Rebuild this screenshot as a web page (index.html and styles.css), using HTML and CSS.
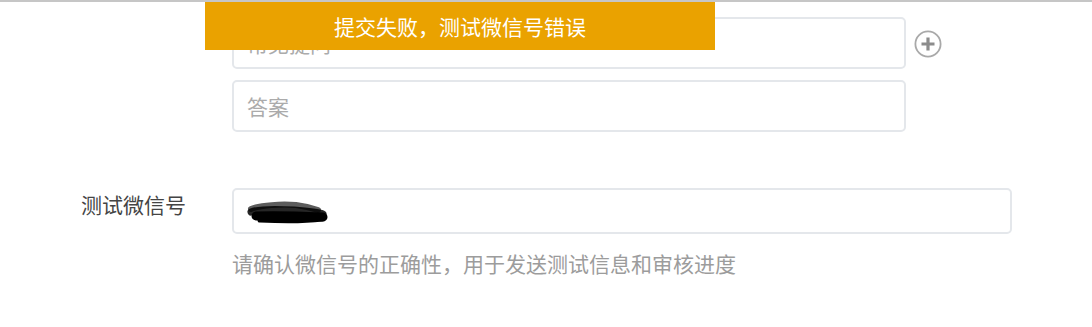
FILE: index.html
```html
<!DOCTYPE html>
<html lang="zh-CN">
<head>
<meta charset="utf-8">
<title>测试微信号</title>
<link rel="stylesheet" href="styles.css">
</head>
<body>
<div class="page">
  <form class="form">
    <div class="row">
      <div class="label"></div>
      <div class="controls">
        <div class="qa-line">
          <input class="field field-qa" type="text" placeholder="常见提问">
          <span class="add-btn" aria-label="添加">
            <svg width="28" height="28" viewBox="0 0 28 28">
              <circle cx="14" cy="14" r="12.6" fill="none" stroke="#a9a9a9" stroke-width="1.8"/>
              <path d="M7.5 14 H20.5 M14 7.5 V20.5" stroke="#8c8c8c" stroke-width="3.2" stroke-linecap="butt"/>
            </svg>
          </span>
        </div>
        <input class="field field-qa answer" type="text" placeholder="答案">
      </div>
    </div>

    <div class="row row-wx">
      <label class="label">测试微信号</label>
      <div class="controls">
        <div class="wx-wrap">
          <input class="field field-wx" type="text">
          <svg class="scribble" width="90" height="30" viewBox="0 0 90 30">
            <path d="M5 10 C 15 6, 35 5, 50 6 C 58 7, 66 9, 72 11" fill="none" stroke="#333" stroke-opacity="0.8" stroke-width="6" stroke-linecap="round"/>
            <path d="M5 13 C 12 10, 30 10, 48 11 C 62 12, 72 13, 77 15" fill="none" stroke="#000" stroke-opacity="0.85" stroke-width="7" stroke-linecap="round"/>
            <path d="M10 17 C 30 16, 55 17, 77 18" fill="none" stroke="#000" stroke-width="9" stroke-linecap="round"/>
            <path d="M14 21 C 35 22, 60 22, 76 20" fill="none" stroke="#000" stroke-width="5" stroke-linecap="round"/>
          </svg>
        </div>
        <p class="help">请确认微信号的正确性，用于发送测试信息和审核进度</p>
      </div>
    </div>
  </form>

  <div class="toast">提交失败，测试微信号错误</div>
</div>
</body>
</html>
```
FILE: styles.css
```css
* { box-sizing: border-box; }

html, body {
  margin: 0;
  padding: 0;
  background: #fff;
}

body {
  font-family: "Noto Sans CJK SC", "Noto Sans", "Liberation Sans", sans-serif;
  font-size: 21px;
  color: #333;
  border-top: 2px solid #c6c6c6;
  height: 327px;
  overflow: hidden;
}

.page {
  position: relative;
}

.form {
  padding-top: 15px;
}

.row {
  display: grid;
  grid-template-columns: 232px 1fr;
}

.label {
  padding-left: 81px;
  padding-top: 1px;
  line-height: 30px;
  color: #444;
  font-size: 21px;
}

.controls {
  display: flex;
  flex-direction: column;
}

.qa-line {
  display: flex;
  align-items: center;
  gap: 8px;
}

.field {
  display: block;
  border: 2px solid #e4e7eb;
  border-radius: 5px;
  background: #fff;
  font-family: inherit;
  font-size: 21px;
  color: #333;
  padding: 0 0 0 13px;
  outline: none;
}

.field::placeholder {
  color: #ababab;
}

.field-qa {
  width: 674px;
  height: 52px;
}

.answer {
  margin-top: 11px;
}

.add-btn {
  display: inline-flex;
  width: 28px;
  height: 28px;
  margin-top: 2px;
}

.row-wx {
  margin-top: 56px;
}

.wx-wrap {
  position: relative;
  width: 780px;
}

.field-wx {
  width: 780px;
  height: 46px;
}

.scribble {
  position: absolute;
  top: 11px;
  left: 14px;
}

.help {
  margin: 14px 0 0;
  line-height: 30px;
  color: #9c9c9c;
  font-size: 21px;
}

.toast {
  position: absolute;
  top: 0;
  left: 205px;
  width: 510px;
  height: 48px;
  background: #eaa200;
  color: #fff;
  text-align: center;
  line-height: 48px;
  font-size: 21px;
}
```
